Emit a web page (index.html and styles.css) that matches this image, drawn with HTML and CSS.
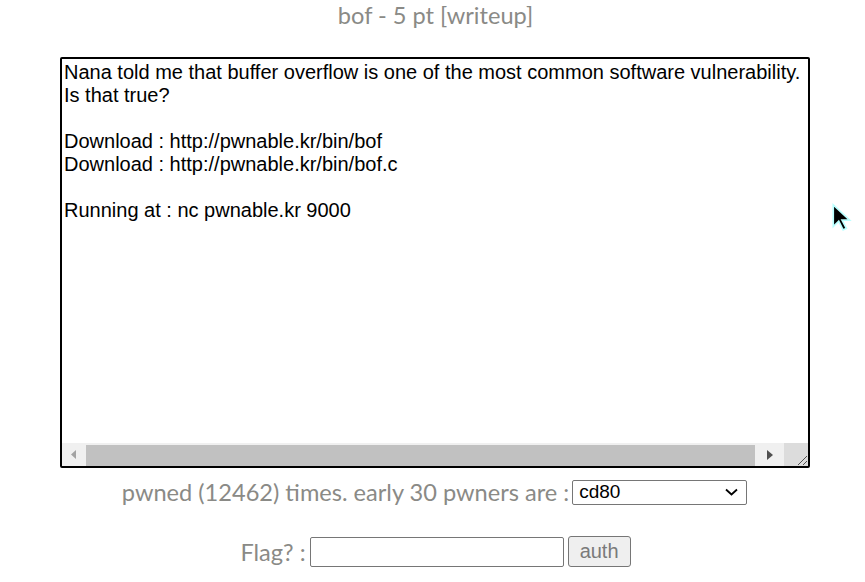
FILE: index.html
```html
<!DOCTYPE html>
<html>
<head>
<meta charset="utf-8">
<link rel="stylesheet" href="styles.css">
</head>
<body>
<div class="page">
  <div class="title">bof - 5 pt [writeup]</div>
  <div class="box">
    <div class="box-text">Nana told me that buffer overflow is one of the most common software vulnerability. 
Is that true?

Download : http://pwnable.kr/bin/bof
Download : http://pwnable.kr/bin/bof.c

Running at : nc pwnable.kr 9000</div>
    <div class="scrollbar">
      <div class="sb-btn"><svg width="6" height="9" viewBox="0 0 6 9"><path d="M5 0 L0 4.5 L5 9 Z" fill="#a3a3a3"/></svg></div>
      <div class="sb-thumb"></div>
      <div class="sb-btn sb-right"><svg width="6" height="10" viewBox="0 0 6 10"><path d="M0 0 L6 5 L0 10 Z" fill="#505050"/></svg></div>
      <div class="sb-corner"><svg width="14" height="14" viewBox="0 0 14 14"><path d="M13 4 L4 13 M13 9 L9 13" stroke="#505050" stroke-width="1"/></svg></div>
    </div>
  </div>
  <div class="pwned">
    <span>pwned (12462) times. early 30 pwners are :</span>
    <div class="select"><span>cd80</span><svg width="13" height="8" viewBox="0 0 13 8"><path d="M1 1.5 L6.5 6.5 L12 1.5" stroke="#000" stroke-width="1.8" fill="none"/></svg></div>
  </div>
  <div class="flag">
    <span>Flag? :</span>
    <div class="input"></div>
    <div class="button">auth</div>
  </div>
</div>
<svg class="cursor" width="24" height="34" viewBox="0 0 22 30"><path d="M3 2 L3 22 L8 17 L12 25 L15 23.5 L11 16 L18 16 Z" fill="#000" stroke="#bff" stroke-width="1.5"/></svg>
</body>
</html>
```
FILE: styles.css
```css
html, body {
  margin: 0;
  padding: 0;
  background: #fff;
}
.page {
  width: 865px;
  font-family: Lato, "Liberation Sans", sans-serif;
  color: #8a8a86;
}
.title {
  text-align: center;
  font-size: 23.6px;
  line-height: 28px;
  padding-top: 1px;
  padding-left: 6px;
}
.box {
  margin: 28px 0 0 60px;
  width: 750px;
  height: 411px;
  box-sizing: border-box;
  border: 2px solid #000;
  border-radius: 2px;
  display: flex;
  flex-direction: column;
}
.box-text {
  flex: 1;
  font-family: "Liberation Sans", Arial, sans-serif;
  font-size: 20px;
  line-height: 23px;
  color: #000;
  white-space: pre;
  overflow: hidden;
  padding: 2px 0 0 2px;
}
.scrollbar {
  height: 23px;
  display: flex;
  background: #f0f0f0;
}
.sb-btn {
  width: 24px;
  display: flex;
  align-items: center;
  justify-content: center;
}
.sb-right {
  width: 29px;
}
.sb-thumb {
  flex: 1;
  margin: 2px 0 0 0;
  background: #c1c1c1;
}
.sb-corner {
  width: 24px;
  background: #dcdcdc;
  display: flex;
  align-items: flex-end;
  justify-content: flex-end;
}
.pwned {
  display: flex;
  justify-content: center;
  align-items: center;
  gap: 3px;
  margin-top: 11px;
  padding-left: 4px;
  font-size: 23.6px;
  height: 26px;
}
.select {
  width: 175px;
  height: 25px;
  box-sizing: border-box;
  border: 1px solid #767676;
  border-radius: 2px;
  display: flex;
  align-items: center;
  justify-content: space-between;
  padding: 0 8px 0 6px;
  font-family: "Liberation Sans", Arial, sans-serif;
  font-size: 19px;
  color: #000;
}
.flag {
  display: flex;
  justify-content: center;
  align-items: center;
  gap: 4px;
  margin-top: 31px;
  padding-left: 6px;
  font-size: 23.6px;
  height: 31px;
}
.input {
  width: 254px;
  height: 30px;
  box-sizing: border-box;
  border: 1px solid #767676;
  border-radius: 2px;
}
.button {
  width: 63px;
  height: 31px;
  box-sizing: border-box;
  border: 1px solid #767676;
  border-radius: 3px;
  background: #efefef;
  display: flex;
  align-items: center;
  justify-content: center;
  font-family: "Liberation Sans", Arial, sans-serif;
  font-size: 20px;
  color: #7a7a7a;
}
.cursor {
  position: absolute;
  left: 830px;
  top: 202px;
}
```
